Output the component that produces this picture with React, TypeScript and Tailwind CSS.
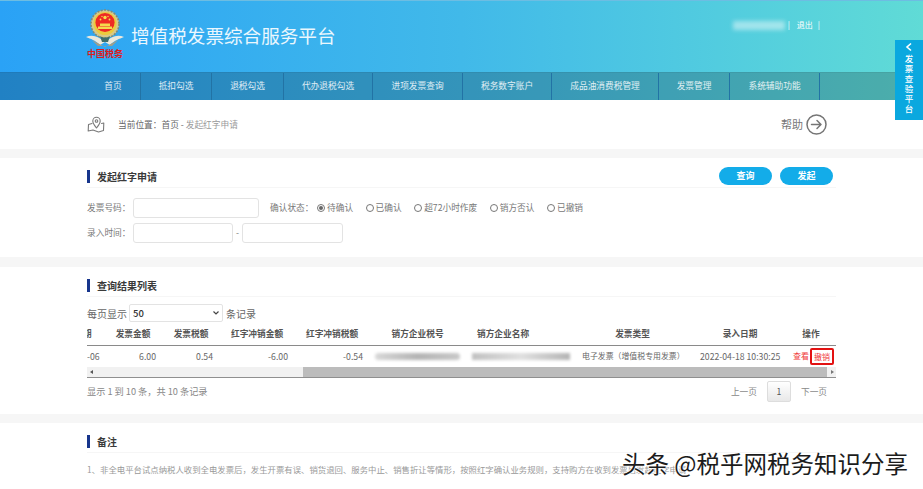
const cjk = "font-['Noto_Sans_CJK_SC','Noto_Sans',sans-serif]";

const navItems = [
  { label: "首页", width: "w-[55px]" },
  { label: "抵扣勾选", width: "w-[71px]" },
  { label: "退税勾选", width: "w-[72px]" },
  { label: "代办退税勾选", width: "w-[89px]" },
  { label: "进项发票查询", width: "w-[90px]" },
  { label: "税务数字账户", width: "w-[89px]" },
  { label: "成品油消费税管理", width: "w-[107px]" },
  { label: "发票管理", width: "w-[71px]" },
  { label: "系统辅助功能", width: "w-[90px]" },
];

const statuses = [
  { label: "待确认", checked: true },
  { label: "已确认", checked: false },
  { label: "超72小时作废", checked: false },
  { label: "销方否认", checked: false },
  { label: "已撤销", checked: false },
];

function Emblem() {
  return (
    <svg width="38" height="40" viewBox="0 0 38 40" className="block">
      {/* outer ring */}
      <circle cx="19" cy="15" r="14" fill="#d6c98a" />
      <circle cx="19" cy="15" r="14" fill="none" stroke="#7f8a78" strokeWidth="1.6" strokeDasharray="2 1.4" />
      <circle cx="19" cy="14.5" r="11.5" fill="#eccb3e" />
      <circle cx="19" cy="13.5" r="9.6" fill="#ee2a24" />
      {/* stars */}
      <circle cx="19" cy="8.5" r="1.7" fill="#f8e04c" />
      <circle cx="14.5" cy="10.5" r="0.9" fill="#f8e04c" />
      <circle cx="23.5" cy="10.5" r="0.9" fill="#f8e04c" />
      <circle cx="16" cy="7.5" r="0.7" fill="#f8e04c" />
      <circle cx="22" cy="7.5" r="0.7" fill="#f8e04c" />
      {/* gate */}
      <path d="M14 14.5 H24 V17 H14Z" fill="#f4d94e" />
      <path d="M12 17.5 H26 V20 H12Z" fill="#f4d94e" />
      {/* wings */}
      <path d="M0 28 C7 25 13 28 19 33 L14 36 C9 31 5 30 0 28Z" fill="#ece9dd" />
      <path d="M38 28 C31 25 25 28 19 33 L24 36 C29 31 33 30 38 28Z" fill="#ece9dd" />
      <path d="M6 31 L19 38 L32 31 L26 37 L12 37Z" fill="#a39f88" />
      <path d="M14 27 C17 29 21 29 24 27 L22 33 H16Z" fill="#3f6f6a" />
    </svg>
  );
}

function MapPinIcon() {
  return (
    <svg width="18" height="17" viewBox="0 0 18 17" fill="none" stroke="#7a7a7a" strokeWidth="1.1" strokeLinecap="round" strokeLinejoin="round">
      <path d="M5 7.5 L1.5 8.5 L1.2 15 L6 14 L11.5 16 L16.5 14.5 L16.8 7 L14.5 7.5" />
      <path d="M9.5 12 C7.5 9.5 5.8 7.5 5.8 5 A3.7 3.7 0 0 1 13.2 5 C13.2 7.5 11.5 9.5 9.5 12Z" />
      <circle cx="9.5" cy="5" r="1.3" />
    </svg>
  );
}

function HelpIcon() {
  return (
    <svg width="21" height="21" viewBox="0 0 21 21" fill="none" stroke="#757575" strokeWidth="1.5" strokeLinecap="round" strokeLinejoin="round">
      <circle cx="10.5" cy="10.5" r="9.5" />
      <path d="M5.5 10.5 H15 M11 6.5 L15 10.5 L11 14.5" />
    </svg>
  );
}

function SectionTitle({ title, children }: { title: string; children?: React.ReactNode }) {
  return (
    <div className="flex items-center justify-between border-b border-[#f6f6f6] h-[23px]">
      <div className="flex items-center mt-[1px]">
        <span className="w-[3px] h-[13px] bg-[#17358c]" />
        <span className="ml-[7px] text-[10px] font-bold text-[#3a3a3a]">{title}</span>
      </div>
      {children}
    </div>
  );
}

function PillButton({ label }: { label: string }) {
  return (
    <button className="w-[53px] h-[18px] rounded-full bg-[#13ace9] text-white text-[9px] font-bold leading-[18px]">
      {label}
    </button>
  );
}

function TextBox({ width }: { width: string }) {
  return <input className={`${width} h-[20px] border border-[#e3e3e3] rounded-[3px] bg-white`} />;
}

export default function App() {
  return (
    <div className={`relative w-[923px] h-[489px] overflow-hidden bg-[#f6f6f6] ${cjk}`}>
      {/* Header */}
      <div className="bg-linear-to-r from-[#2aa2f6] via-[#41b9e9] to-[#60dbd6]">
        <div className="h-[72px] border-t border-[#6dbde2] pl-[86px] pr-[103px] flex justify-between">
          <div className="flex items-start">
            <div className="w-[38px] pt-[8px] flex flex-col items-center">
              <Emblem />
              <span className="text-[9px] leading-[12px] font-bold text-[#dd1c1c] whitespace-nowrap -mt-[1px]">中国税务</span>
            </div>
            <h1 className="ml-[7px] mt-[21px] text-[18.6px] leading-[26px] text-white/90 whitespace-nowrap">增值税发票综合服务平台</h1>
          </div>
          <div className="flex items-center h-[48px] text-[8px] text-white">
            <span className="w-[52px] h-[9px] bg-white/45 blur-[2px]" />
            <span className="ml-[3px]">|</span>
            <span className="ml-[7px]">退出</span>
            <span className="ml-[5px]">|</span>
          </div>
        </div>
        <nav className="h-[28px] bg-black/20 border-t border-black/5 pl-[86px] flex">
          {navItems.map((item) => (
            <a
              key={item.label}
              className={`${item.width} border-r border-[#2273a5] text-center text-[8.7px] leading-[26px] text-white/85`}
            >
              {item.label}
            </a>
          ))}
        </nav>
      </div>

      {/* Breadcrumb */}
      <div className="h-[49px] bg-white pl-[87px] pr-[96px] flex items-center justify-between">
        <div className="flex items-center">
          <MapPinIcon />
          <span className="ml-[13px] text-[8.7px] text-[#666]">当前位置：首页 - <span className="text-[#999]">发起红字申请</span></span>
        </div>
        <div className="flex items-center gap-[3px]">
          <span className="text-[11px] text-[#777]">帮助</span>
          <HelpIcon />
        </div>
      </div>

      {/* Search form */}
      <section className="mt-[9px] h-[99px] bg-white px-[87px] pt-[7px]">
        <SectionTitle title="发起红字申请">
          <div className="flex gap-[8px] mr-[3px]">
            <PillButton label="查询" />
            <PillButton label="发起" />
          </div>
        </SectionTitle>
        <div className="mt-[10px] flex items-center text-[8.7px] text-[#777]">
          <span className="w-[46px]">发票号码：</span>
          <TextBox width="w-[126px]" />
          <span className="ml-[11px] w-[47px]">确认状态：</span>
          <div className="flex gap-[12.5px]">
            {statuses.map((status) => (
              <label key={status.label} className="flex items-center gap-[2px]">
                <span className="w-[8px] h-[8px] rounded-full border border-[#777] flex items-center justify-center bg-white">
                  {status.checked && <span className="w-[4px] h-[4px] rounded-full bg-[#666]" />}
                </span>
                {status.label}
              </label>
            ))}
          </div>
        </div>
        <div className="mt-[5px] flex items-center text-[8.7px] text-[#777]">
          <span className="w-[46px]">录入时间：</span>
          <TextBox width="w-[100px]" />
          <span className="w-[9px] text-center">-</span>
          <TextBox width="w-[101px]" />
        </div>
      </section>

      {/* Results */}
      <section className="mt-[10px] h-[147px] bg-white px-[87px] pt-[7px]">
        <SectionTitle title="查询结果列表" />
        <div className="mt-[7px] flex items-center text-[10px] text-[#666]">
          <span>每页显示</span>
          <div className="relative ml-[2px]">
            <select className="block appearance-none w-[94px] h-[18px] border border-[#e3e3e3] rounded-[2px] text-[9.5px] font-medium text-[#333] bg-white pl-[3px]">
              <option>50</option>
            </select>
            <svg width="6" height="4" viewBox="0 0 6 4" fill="none" stroke="#444" strokeWidth="1.2" className="absolute right-[4px] top-[7px] pointer-events-none">
              <path d="M0.5 0.5 L3 3 L5.5 0.5" />
            </svg>
          </div>
          <span className="ml-[3px]">条记录</span>
        </div>
        <div className="mt-[2px] w-[749px] overflow-hidden">
          <table className="w-[749px] table-fixed">
            <colgroup>
              <col className="w-[17px]" />
              <col className="w-[58px]" />
              <col className="w-[58px]" />
              <col className="w-[74px]" />
              <col className="w-[76px]" />
              <col className="w-[95px]" />
              <col className="w-[110px]" />
              <col className="w-[115px]" />
              <col className="w-[100px]" />
              <col className="w-[46px]" />
            </colgroup>
            <thead>
              <tr className="h-[21px] border-b border-[#8a8a8a] text-[8.7px] text-[#555] text-center">
                <th className="font-bold pb-[2px] text-left whitespace-nowrap overflow-hidden"><span className="-ml-[4px]">期</span></th>
                <th className="font-bold pb-[2px]">发票金额</th>
                <th className="font-bold pb-[2px]">发票税额</th>
                <th className="font-bold pb-[2px]">红字冲销金额</th>
                <th className="font-bold pb-[2px]">红字冲销税额</th>
                <th className="font-bold pb-[2px]">销方企业税号</th>
                <th className="font-bold pb-[2px] pr-[34px] whitespace-nowrap">销方企业名称</th>
                <th className="font-bold pb-[2px]">发票类型</th>
                <th className="font-bold pb-[2px]">录入日期</th>
                <th className="font-bold pb-[2px] pr-[4px]">操作</th>
              </tr>
            </thead>
            <tbody>
              <tr className="h-[22px] text-[8.7px] text-[#666]">
                <td className="whitespace-nowrap overflow-hidden">-06</td>
                <td className="text-right pr-[6px]">6.00</td>
                <td className="text-right pr-[7px]">0.54</td>
                <td className="text-right pr-[6px]">-6.00</td>
                <td className="text-right pr-[7px]">-0.54</td>
                <td className="pl-[5px] pr-[5px]">
                  <div className="h-[7px] rounded-full bg-linear-to-r from-[#d8d8d8] via-[#b4b4b4] to-[#c8c8c8] blur-[1.5px]" />
                </td>
                <td className="pl-[7px] pr-[5px]">
                  <div className="h-[7px] bg-linear-to-r from-[#c0c0c0] via-[#e0e0e0] to-[#b4b4b4] blur-[1.5px]" />
                </td>
                <td className="pl-[7px] whitespace-nowrap text-[7.9px]">电子发票（增值税专用发票）</td>
                <td className="pl-[10px] whitespace-nowrap">2022-04-18 10:30:25</td>
                <td className="pl-[3px] whitespace-nowrap text-[8px] text-[#f03a3a]">
                  <span>查看</span>
                  <span className="ml-[1px] inline-block align-middle border-2 border-[#e31212] rounded-[2px] px-[2px] leading-[13px]">撤销</span>
                </td>
              </tr>
            </tbody>
          </table>
          <div className="h-[11px] bg-[#f1f1f1] border-b border-[#8f8f8f] flex items-center">
            <span className="ml-[3px] w-0 h-0 border-y-[2.5px] border-y-transparent border-r-[3px] border-r-[#555]" />
            <span className="ml-[210px] w-[524px] h-full bg-[#bcbcbc]" />
            <span className="ml-[4px] w-0 h-0 border-y-[2.5px] border-y-transparent border-l-[3px] border-l-[#777]" />
          </div>
        </div>
        <div className="mt-[3px] pr-[9px] flex items-center justify-between text-[8.7px] text-[#888]">
          <span className="text-[9.2px]">显示 1 到 10 条，共 10 条记录</span>
          <div className="flex items-center gap-[10px]">
            <span>上一页</span>
            <span className="w-[24px] h-[21px] border border-[#ddd] rounded-[2px] bg-linear-to-b from-white to-[#e8e8e8] text-[#555] text-center leading-[19px]">1</span>
            <span>下一页</span>
          </div>
        </div>
      </section>

      {/* Notes */}
      <section className="mt-[9px] h-[66px] bg-white px-[87px] pt-[7px]">
        <SectionTitle title="备注" />
        <p className="mt-[10px] text-[8.4px] leading-[12px] text-[#999] whitespace-nowrap">
          1、非全电平台试点纳税人收到全电发票后，发生开票有误、销货退回、服务中止、销售折让等情形，按照红字确认业务规则，支持购方在收到发票后发起红字申请
        </p>
      </section>

      {/* Side tab */}
      <div className="absolute left-[895px] top-[40px] w-[28px] h-[80px] bg-[#0aa8df] flex flex-col items-center pt-[2px] text-white">
        <svg width="8" height="10" viewBox="0 0 8 10" fill="none" stroke="white" strokeWidth="1.6" className="mb-[3px]">
          <path d="M6 1.5 L2 5 L6 8.5" />
        </svg>
        <span className="[writing-mode:vertical-rl] text-[8.5px] font-medium leading-[10px] tracking-[1.5px]">发票查验平台</span>
      </div>

      {/* Watermark */}
      <div className="absolute left-[622px] top-[448px] text-[23.5px] leading-[30px] text-[#1c1c1c] whitespace-nowrap [text-shadow:0_0_2px_white,0_0_2px_white,0_0_2px_white,0_0_1px_white]">
        头条 @税乎网税务知识分享
      </div>
    </div>
  );
}
